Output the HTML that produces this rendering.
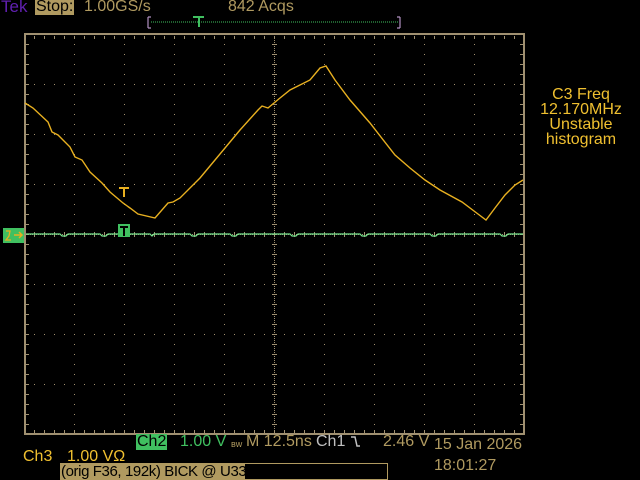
<!DOCTYPE html>
<html><head><style>
html,body{margin:0;padding:0;background:#000;width:640px;height:480px;overflow:hidden;}
body{position:relative;font-family:"Liberation Sans",sans-serif;}
.t{position:absolute;font-size:16px;line-height:16px;white-space:pre;}
</style></head><body>
<svg width="640" height="480" style="position:absolute;left:0;top:0">
<defs>
<pattern id="vd" x="0" y="34" width="1" height="10" patternUnits="userSpaceOnUse"><rect x="0" y="0" width="1" height="1" fill="#a09070"/></pattern>
<pattern id="hd" x="24" y="0" width="10" height="1" patternUnits="userSpaceOnUse"><rect x="0" y="0" width="1" height="1" fill="#a09070"/></pattern>
<pattern id="cd" x="0" y="0" width="2" height="2" patternUnits="userSpaceOnUse"><rect x="0" y="0" width="1" height="1" fill="#a09070"/></pattern>
<pattern id="tkv" x="0" y="34" width="5" height="10" patternUnits="userSpaceOnUse"><rect x="0" y="0" width="5" height="1" fill="#a09070"/></pattern>
<pattern id="tkh" x="24" y="0" width="10" height="5" patternUnits="userSpaceOnUse"><rect x="0" y="0" width="1" height="5" fill="#a09070"/></pattern>
</defs>
<g>
<rect x="74" y="34" width="1" height="400" fill="url(#vd)"/>
<rect x="124" y="34" width="1" height="400" fill="url(#vd)"/>
<rect x="174" y="34" width="1" height="400" fill="url(#vd)"/>
<rect x="224" y="34" width="1" height="400" fill="url(#vd)"/>
<rect x="324" y="34" width="1" height="400" fill="url(#vd)"/>
<rect x="374" y="34" width="1" height="400" fill="url(#vd)"/>
<rect x="424" y="34" width="1" height="400" fill="url(#vd)"/>
<rect x="474" y="34" width="1" height="400" fill="url(#vd)"/>
<rect x="24" y="84" width="500" height="1" fill="url(#hd)"/>
<rect x="24" y="134" width="500" height="1" fill="url(#hd)"/>
<rect x="24" y="184" width="500" height="1" fill="url(#hd)"/>
<rect x="24" y="284" width="500" height="1" fill="url(#hd)"/>
<rect x="24" y="334" width="500" height="1" fill="url(#hd)"/>
<rect x="24" y="384" width="500" height="1" fill="url(#hd)"/>
<rect x="274" y="34" width="1" height="400" fill="url(#cd)"/>
<rect x="24" y="234" width="500" height="1" fill="url(#cd)"/>
<rect x="272" y="34" width="5" height="400" fill="url(#tkv)"/>
<rect x="24" y="232" width="500" height="5" fill="url(#tkh)"/>
<rect x="26" y="36" width="3" height="398" fill="url(#tkv)"/>
<rect x="520" y="36" width="3" height="398" fill="url(#tkv)"/>
<rect x="24" y="36" width="500" height="3" fill="url(#tkh)"/>
<rect x="24" y="430" width="500" height="3" fill="url(#tkh)"/>
<rect x="24" y="33" width="500" height="2" fill="#a09070"/>
<rect x="24" y="433" width="500" height="2" fill="#a09070"/>
<rect x="24" y="33" width="2" height="402" fill="#a09070"/>
<rect x="523" y="33" width="2" height="402" fill="#a09070"/>
</g>
<polyline fill="none" stroke="#78e890" stroke-width="1.2" points="26,234 60,234 62,236 66,236 68,234 100,234 102,236 106,236 108,234 150,234 152,236 154,234 190,234 192,236 196,236 198,234 230,234 232,236 236,236 238,234 270,234 290,234 292,236 296,236 298,234 330,234 360,234 362,236 366,236 368,234 430,234 432,236 436,236 438,234 500,234 502,236 506,236 508,234 523,234"/>
<polyline fill="none" stroke="#e8b020" stroke-width="1.4" points="25,103 33,108 48,122 52,132 58,135 70,147 75,157 82,160 90,172 102,183 110,192 123,203 130,208 138,214 155,218 168,203 173,202 180,198 200,178 240,130 258,110 262,106 268,108 280,98 290,90 310,80 320,68 326,66 335,80 350,100 370,123 395,155 410,168 425,180 440,190 462,202 478,214 486,220 495,208 505,195 515,185 523,180"/>
<rect x="119" y="187" width="10" height="2" fill="#e8b020"/><rect x="123" y="187" width="2" height="10" fill="#e8b020"/>
<rect x="118" y="224" width="12" height="13" fill="#40c060"/><rect x="123" y="226" width="2" height="10" fill="#000"/><rect x="120" y="226" width="8" height="2" fill="#000"/>
<rect x="3" y="228" width="21" height="15" fill="#40c060"/>
<path d="M14,235 L22,235 M19,232 L22,235 L19,238" stroke="#e8b020" stroke-width="1.5" fill="none"/>
<path d="M6,231 L10,231 L9,236 L6,240 L11,240" stroke="#e8b020" stroke-width="1.3" fill="none"/>
<path d="M148,17 L148,28 M148,17 L151,17 M148,28 L151,28 M400,17 L400,28 M400,17 L397,17 M400,28 L397,28" stroke="#b090c0" stroke-width="1.2" fill="none"/>
<line x1="151" y1="22" x2="398" y2="22" stroke="#40c060" stroke-dasharray="1 1"/>
<rect x="193" y="16" width="11" height="2" fill="#40c060"/><rect x="198" y="16" width="2" height="11" fill="#40c060"/>
<rect x="60.5" y="463.5" width="327" height="16" fill="none" stroke="#b09a60" stroke-width="1"/>
<rect x="60" y="463" width="185" height="17" fill="#b09a60"/>
<path d="M351,437 L355,437 L357,446 L360,446" stroke="#c0c0c0" stroke-width="1.5" fill="none"/>
</svg>
<div class="t" style="left:1px;top:-1px;color:#6020b0;font-size:17px">Tek</div>
<div class="t" style="left:35px;top:-1px;background:#b09a60;color:#000;padding:0 1px">Stop:</div>
<div class="t" style="left:84px;top:-1px;color:#b09a60">1.00GS/s</div>
<div class="t" style="left:228px;top:-1px;color:#b09a60">842 Acqs</div>
<div class="t" style="left:522px;top:87px;width:118px;text-align:center;color:#f0c030;line-height:15px">C3 Freq
12.170MHz
Unstable
histogram</div>
<div class="t" style="left:136px;top:434px;background:#40c060;color:#000;padding:0 1px">Ch2</div>
<div class="t" style="left:180px;top:434px;color:#40c060">1.00 V</div>
<div class="t" style="left:231px;top:436px;color:#b09a60;font-size:9px">ʙw</div>
<div class="t" style="left:246px;top:434px;color:#b09a60">M 12.5ns</div>
<div class="t" style="left:316px;top:434px;color:#c0c0c0">Ch1</div>
<div class="t" style="left:383px;top:434px;color:#b09a60">2.46 V</div>
<div class="t" style="left:434px;top:437px;color:#b09a60">15 Jan 2026</div>
<div class="t" style="left:434px;top:458px;color:#b09a60">18:01:27</div>
<div class="t" style="left:23px;top:449px;color:#f0c030">Ch3</div>
<div class="t" style="left:67px;top:449px;color:#f0c030">1.00 VΩ</div>
<div class="t" style="left:61px;top:464px;color:#000;font-size:15px;letter-spacing:-0.4px">(orig F36, 192k) BICK @ U33</div>
</body></html>
